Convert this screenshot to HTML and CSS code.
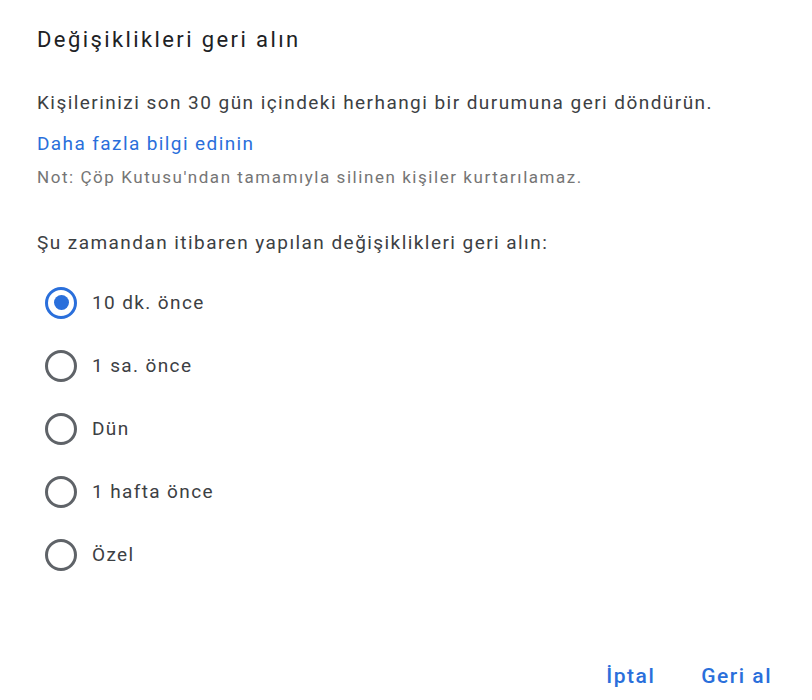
FILE: index.html
```html
<!DOCTYPE html>
<html lang="tr">
<head>
  <meta charset="UTF-8" />
  <title>Değişiklikleri geri alın</title>
  <link rel="stylesheet" href="styles.css">
</head>
<body>
  <div class="dialog">
    <h2 class="title">Değişiklikleri geri alın</h2>
    <p class="lead">Kişilerinizi son 30 gün içindeki herhangi bir durumuna geri döndürün.</p>
    <a class="link" href="#">Daha fazla bilgi edinin</a>
    <p class="note">Not: Çöp Kutusu'ndan tamamıyla silinen kişiler kurtarılamaz.</p>
    <p class="question">Şu zamandan itibaren yapılan değişiklikleri geri alın:</p>

    <ul class="options">
      <li class="option checked"><span class="radio"></span><span>10 dk. önce</span></li>
      <li class="option"><span class="radio"></span><span>1 sa. önce</span></li>
      <li class="option"><span class="radio"></span><span>Dün</span></li>
      <li class="option"><span class="radio"></span><span>1 hafta önce</span></li>
      <li class="option"><span class="radio"></span><span>Özel</span></li>
    </ul>

    <div class="actions">
      <button>İptal</button>
      <button>Geri al</button>
    </div>
  </div>
</body>
</html>
```

FILE: styles.css
```css
body {
  margin: 0;
  background: white;
  font-family: Roboto, "Noto Sans", sans-serif;
  color: #3c4043;
}

.dialog {
  width: 812px;
  height: 700px;
  box-sizing: border-box;
  padding: 26px 40px 0 37px;
  display: flex;
  flex-direction: column;
  align-items: flex-start;
}

.title {
  margin: 0;
  font-size: 22px;
  line-height: 28px;
  font-weight: 400;
  letter-spacing: 2.4px;
  color: #202124;
}

.lead {
  margin: 36px 0 0;
  font-size: 19px;
  line-height: 26px;
  letter-spacing: 1.45px;
}

.link {
  margin-top: 15px;
  font-size: 19px;
  line-height: 26px;
  letter-spacing: 1.4px;
  color: #2a6fdb;
  text-decoration: none;
}

.note {
  margin: 9px 0 0;
  font-size: 17px;
  line-height: 22px;
  letter-spacing: 1.55px;
  color: #757575;
}

.question {
  margin: 42px 0 0;
  font-size: 19px;
  line-height: 26px;
  letter-spacing: 1.44px;
}

.options {
  list-style: none;
  margin: 15px 0 0;
  padding: 0;
}

.option {
  height: 63px;
  display: flex;
  align-items: center;
  gap: 15px;
  padding-left: 8px;
  font-size: 19px;
  letter-spacing: 1.38px;
}

.radio {
  width: 32px;
  height: 32px;
  box-sizing: border-box;
  border: 3px solid #5f6368;
  border-radius: 50%;
  display: flex;
  align-items: center;
  justify-content: center;
}

.checked .radio {
  border-color: #2a6fdb;
}

.checked .radio::after {
  content: "";
  width: 15px;
  height: 15px;
  border-radius: 50%;
  background: #2a6fdb;
}

.actions {
  align-self: stretch;
  margin-top: 77px;
  display: flex;
  justify-content: flex-end;
  gap: 46px;
}

.actions button {
  background: none;
  border: none;
  padding: 0;
  font-family: inherit;
  font-size: 21px;
  line-height: 26px;
  font-weight: 500;
  letter-spacing: 1.5px;
  color: #2a6fdb;
  cursor: pointer;
}
```
